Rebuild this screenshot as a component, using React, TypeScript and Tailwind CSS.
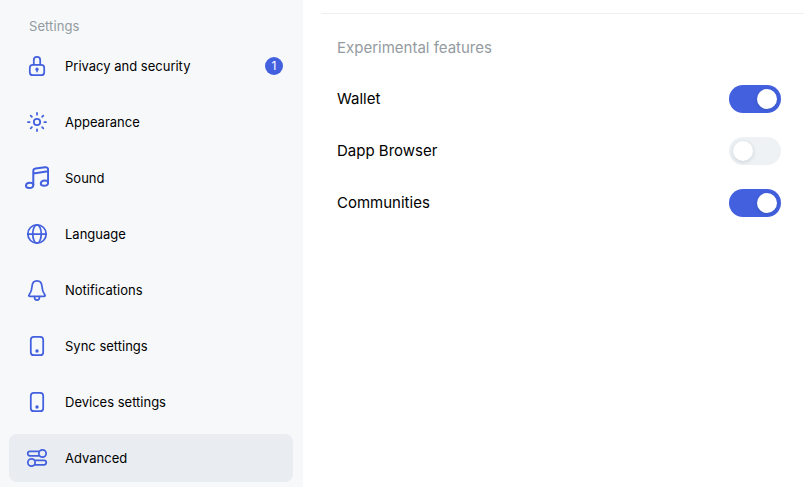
import { useState, type ReactNode } from "react";
import clsx from "clsx";

function Icon({ children }: { children: ReactNode }) {
  return (
    <svg
      className="size-6 shrink-0 text-[#4360df]"
      viewBox="0 0 24 24"
      fill="none"
      stroke="currentColor"
      strokeWidth="1.75"
      strokeLinecap="round"
      strokeLinejoin="round"
    >
      {children}
    </svg>
  );
}

const LockIcon = () => (
  <Icon>
    <rect x="4.8" y="10.8" width="14.4" height="10.4" rx="3" />
    <path d="M8.8 10.5V6a3.2 3.2 0 0 1 6.4 0v4.5" />
    <circle cx="12" cy="15.2" r="1.6" fill="currentColor" stroke="none" />
    <path d="M12 15.5v2.2" strokeWidth="1.5" />
  </Icon>
);

const SunIcon = () => (
  <Icon>
    <circle cx="12" cy="12" r="3.2" />
    <path d="M12 2.9v1.8M12 19.3v1.8M2.9 12h1.8M19.3 12h1.8M5.7 5.7l1.2 1.2M17.1 17.1l1.2 1.2M5.7 18.3l1.2-1.2M17.1 6.9l1.2-1.2" />
  </Icon>
);

const MusicIcon = () => (
  <Icon>
    <path d="M8.3 19V5c0-1.5.8-2.4 2.2-2.6l9.6-1.2c1.8-.2 3 .8 3 2.5v13.1M8.3 7.5l14.8-2.2" strokeWidth="2" />
    <path d="M8.3 19c0 1.9-1.7 3-3.9 3-2.1 0-3.4-.8-3.4-2.3 0-1.7 1.7-2.9 4-2.9 2 0 3.3.8 3.3 2.2ZM23.1 16.8c0 1.9-1.7 3-3.9 3-2.1 0-3.4-.8-3.4-2.3 0-1.7 1.7-2.9 4-2.9 2 0 3.3.8 3.3 2.2Z" strokeWidth="2" />
  </Icon>
);

const GlobeIcon = () => (
  <Icon>
    <circle cx="12" cy="12" r="9.2" />
    <ellipse cx="12" cy="12" rx="4.25" ry="9.2" />
    <path d="M2.8 12h18.4" />
  </Icon>
);

const BellIcon = () => (
  <Icon>
    <path d="M12 2.75c-3 0-4.7 2.2-4.9 5.2-.2 4-.8 5.9-2.9 8.7-.7 1-.3 1.8.8 1.8h14c1.1 0 1.5-.8.8-1.8-2.1-2.8-2.7-4.7-2.9-8.7-.2-3-1.9-5.2-4.9-5.2Z" />
    <path d="M9.6 18.6v.9c0 1.5 1 2.5 2.4 2.5s2.4-1 2.4-2.5v-.9" />
  </Icon>
);

const DeviceIcon = () => (
  <Icon>
    <rect x="5.8" y="2.8" width="12.4" height="18.4" rx="3" />
    <circle cx="12" cy="17" r="1.7" fill="currentColor" stroke="none" />
  </Icon>
);

const SlidersIcon = () => (
  <Icon>
    <path d="M14 5.25H5a2.25 2.25 0 0 0 0 4.5h9M10 14.25h9a2.25 2.25 0 0 1 0 4.5h-9" />
    <circle cx="17.5" cy="7.5" r="3.65" fill="#e9ecf0" />
    <circle cx="6.5" cy="16.5" r="3.65" fill="#e9ecf0" />
  </Icon>
);

const menu = [
  { label: "Privacy and security", icon: LockIcon, badge: 1 },
  { label: "Appearance", icon: SunIcon },
  { label: "Sound", icon: MusicIcon },
  { label: "Language", icon: GlobeIcon },
  { label: "Notifications", icon: BellIcon },
  { label: "Sync settings", icon: DeviceIcon },
  { label: "Devices settings", icon: DeviceIcon },
  { label: "Advanced", icon: SlidersIcon },
];

function FeatureRow({ label, initial }: { label: string; initial: boolean }) {
  const [on, setOn] = useState(initial);
  return (
    <div className="flex h-13 items-center justify-between pr-[29px] pl-[34px] text-[15px]">
      <span>{label}</span>
      <button
        role="switch"
        aria-checked={on}
        aria-label={label}
        onClick={() => setOn(!on)}
        className={clsx(
          "flex h-7 w-13 items-center rounded-full px-1",
          on ? "justify-end bg-[#4360df]" : "justify-start bg-[#eef2f5]",
        )}
      >
        <span className="size-5 rounded-full bg-white shadow-[0_1px_4px_rgba(0,34,51,0.16)]" />
      </button>
    </div>
  );
}

export default function App() {
  return (
    <div className="flex h-screen overflow-hidden bg-white font-['Inter',sans-serif] text-black">
      <aside className="flex w-[303px] shrink-0 flex-col bg-[#f6f8fa] pt-4">
        <h2 className="pl-[29px] text-[13px] leading-5 tracking-[0.08px] text-[#939ba1]">Settings</h2>
        <nav className="mt-1.5 flex flex-col gap-2 pr-2.5 pl-[9px]">
          {menu.map(({ label, icon: ItemIcon, badge }) => (
            <a
              key={label}
              className={clsx(
                "flex h-12 shrink-0 items-center gap-4 rounded-lg pr-2.5 pl-4 text-[13px]",
                label === "Advanced" && "bg-[#e9ecf0]",
              )}
            >
              <ItemIcon />
              <span className="flex-1 leading-5">{label}</span>
              {badge && (
                <span className="flex size-[18px] items-center justify-center rounded-full bg-[#4360df] text-xs text-white">
                  {badge}
                </span>
              )}
            </a>
          ))}
        </nav>
      </aside>
      <main className="min-w-0 flex-1 pt-[13px]">
        <div className="mr-[6px] ml-[18px] h-px bg-[#eeeff0]" />
        <h2 className="mt-[23px] mb-[14px] pl-[34px] text-[15px] leading-[22px] text-[#939ba1]">
          Experimental features
        </h2>
        <FeatureRow label="Wallet" initial={true} />
        <FeatureRow label="Dapp Browser" initial={false} />
        <FeatureRow label="Communities" initial={true} />
      </main>
    </div>
  );
}
